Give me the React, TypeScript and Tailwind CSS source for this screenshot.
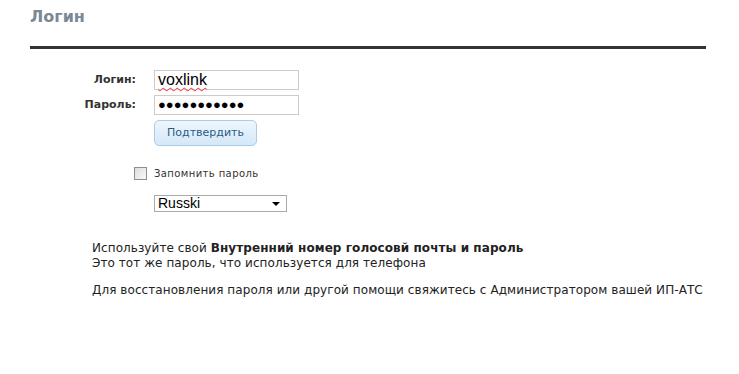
import React from "react";

const App: React.FC = () => {
  return (
    <div className="w-[739px] h-[374px] bg-white font-['DejaVu_Sans',Verdana,sans-serif] text-[#333]">
      {/* Header */}
      <div className="pl-[30px] pt-[7px] h-[46px]">
        <h1 className="text-[16px] leading-[20px] font-bold text-[#7b8895]">Логин</h1>
      </div>
      <div className="ml-[30px] w-[676px] h-[3px] bg-[#333]" />

      {/* Form */}
      <div className="mt-[21px] flex flex-col gap-[5px]">
        <div className="flex items-center">
          <label className="w-[145px] pr-[9px] text-right text-[11px] font-bold">Логин:</label>
          <div className="ml-[9px] w-[145px] h-[20px] border border-[#ccc] flex items-center px-[3px] font-['Liberation_Sans',Arial,sans-serif] text-[16px] text-black">
            <span className="underline decoration-wavy decoration-red-500 decoration-1 underline-offset-2">voxlink</span>
          </div>
        </div>
        <div className="flex items-center">
          <label className="w-[145px] pr-[9px] text-right text-[11px] font-bold">Пароль:</label>
          <div className="ml-[9px] w-[145px] h-[20px] border border-[#ccc] flex items-center px-[3px] font-['Liberation_Sans',Arial,sans-serif] text-[13px] text-black">
            ●●●●●●●●●●●
          </div>
        </div>
        <div className="flex">
          <button className="ml-[154px] w-[103px] h-[26px] rounded-[5px] border border-[#a9cce8] bg-gradient-to-b from-[#eef6fd] to-[#d4e8f8] text-[11px] text-[#2a5b85]">
            Подтвердить
          </button>
        </div>
      </div>

      <div className="mt-[20px] flex items-center">
        <span className="ml-[134px] w-[13px] h-[13px] border border-[#8f8f8f] bg-gradient-to-br from-[#dcdcdc] to-[#fbfbfb]" />
        <span className="ml-[7px] text-[10px] tracking-[0.4px] text-[#333]">Запомнить пароль</span>
      </div>

      <div className="mt-[14px] ml-[154px] w-[133px] h-[17px] border border-[#aaa] flex items-center justify-between pl-[3px] pr-[6px] font-['Liberation_Sans',Arial,sans-serif] text-[14px] text-black">
        <span className="leading-[15px]">Russki</span>
        <svg width="8" height="4" viewBox="0 0 8 4">
          <polygon points="0,0 8,0 4,4" fill="#000" />
        </svg>
      </div>

      {/* Info */}
      <div className="mt-[29px] ml-[92px] text-[12px] leading-[15px] tracking-[0.07px] text-[#222]">
        <p>
          Используйте свой <b>Внутренний номер голосовй почты и пароль</b>
        </p>
        <p>Это тот же пароль, что используется для телефона</p>
        <p className="mt-[12px]">
          Для восстановления пароля или другой помощи свяжитесь с Администратором вашей ИП-АТС
        </p>
      </div>
    </div>
  );
};

export default App;
